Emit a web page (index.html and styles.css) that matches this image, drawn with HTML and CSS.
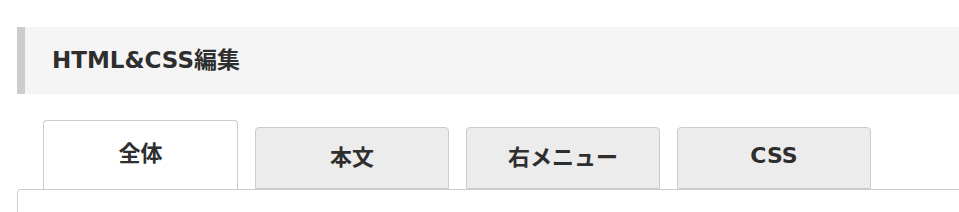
FILE: index.html
```html
<!DOCTYPE html>
<html lang="ja">
<head>
<meta charset="utf-8">
<title>HTML&amp;CSS編集</title>
<link rel="stylesheet" href="styles.css">
</head>
<body>
<div class="page">
  <h2 class="section-title">HTML&amp;CSS編集</h2>
  <div class="tabs">
    <div class="tab active">全体</div>
    <div class="tab">本文</div>
    <div class="tab">右メニュー</div>
    <div class="tab">CSS</div>
  </div>
  <div class="panel"></div>
</div>
</body>
</html>
```
FILE: styles.css
```css
html, body {
  margin: 0;
  padding: 0;
  background: #fff;
  overflow: hidden;
}
body {
  font-family: "DejaVu Sans", "Noto Sans CJK JP", sans-serif;
  color: #333;
}
.page {
  padding: 27px 0 0 17px;
}
.section-title {
  margin: 0 -30px 0 0;
  height: 67px;
  box-sizing: border-box;
  display: flex;
  align-items: center;
  border-left: 8px solid #ccc;
  background: #f5f5f5;
  padding: 0 0 5px 27px;
  font-size: 23px;
  font-weight: bold;
  color: #2e2e2e;
}
.tabs {
  display: flex;
  align-items: flex-end;
  gap: 17px;
  margin-top: 26px;
  padding-left: 26px;
}
.tab {
  box-sizing: border-box;
  width: 194px;
  height: 62px;
  display: flex;
  align-items: center;
  justify-content: center;
  background: #ececec;
  border: 1px solid #ccc;
  border-radius: 4px 4px 0 0;
  padding-bottom: 6px;
  font-size: 22px;
  font-weight: bold;
  color: #2e2e2e;
}
.tab.active {
  width: 195px;
  height: 69px;
  background: #fff;
  border-bottom: none;
  padding-bottom: 9px;
}
.panel {
  margin-right: -30px;
  height: 60px;
  border: 1px solid #ccc;
  border-radius: 3px 0 0 0;
}
```
